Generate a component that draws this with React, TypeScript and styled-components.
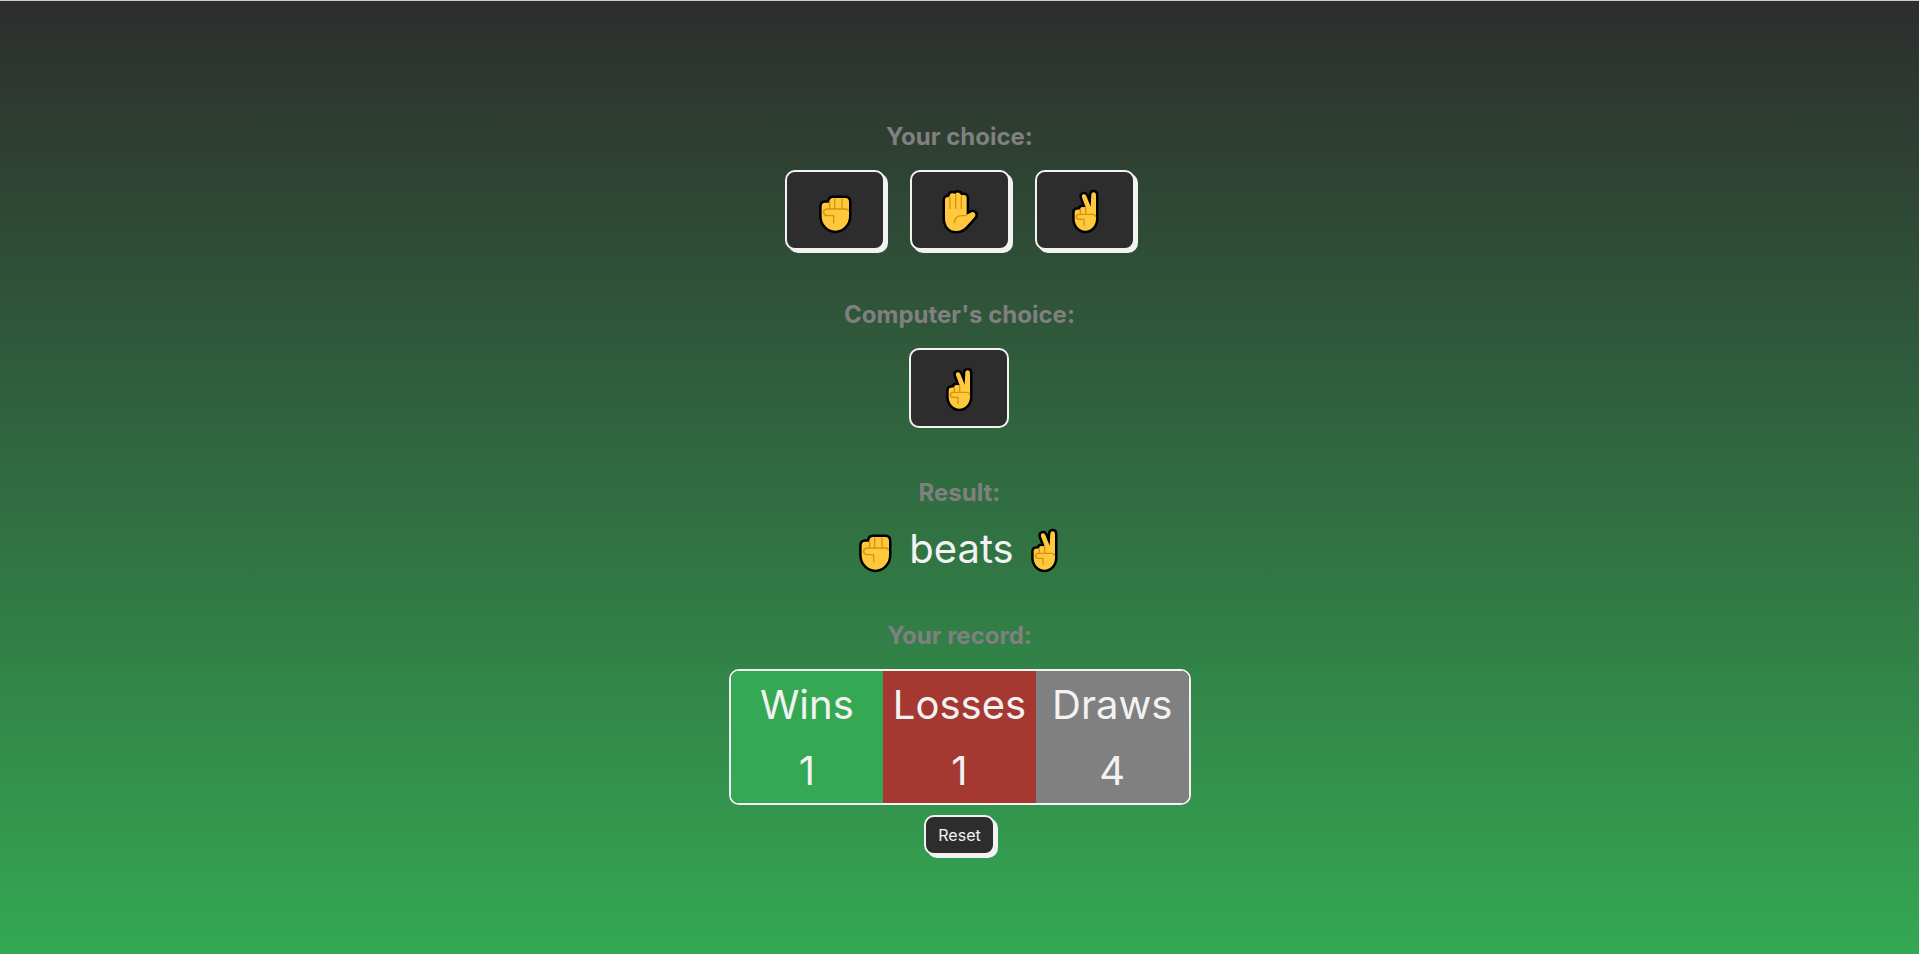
import React, { useState } from "react";
import styled, { createGlobalStyle, css } from "styled-components";

const dark = "#2d2d2d";
const light = "#f2f2f2";
const green = "#34a853";
const red = "#a63832";
const gray = "#808080";

const GlobalStyle = createGlobalStyle`
  *, *::before, *::after { box-sizing: border-box; }
  body {
    margin: 0;
    font-family: Inter, "Liberation Sans", sans-serif;
    color: ${light};
    background: ${dark};
  }
`;

const Page = styled.main`
  min-height: 100vh;
  display: flex;
  flex-direction: column;
  align-items: center;
  justify-content: center;
  gap: 50px;
  padding: 42px 20px 20px;
  border-top: 1px solid #c9cdca;
  background: linear-gradient(${dark}, ${green});
`;

const Section = styled.section`
  display: flex;
  flex-direction: column;
  align-items: center;
`;

const Heading = styled.h2`
  margin: 0 0 19px;
  font-size: 24px;
  line-height: 29px;
  font-weight: 700;
  color: ${gray};
`;

const Choices = styled.div`
  display: flex;
  gap: 25px;
`;

const frame = css`
  border: 2px solid ${light};
  border-radius: 10px;
  background: ${dark};
  color: ${light};
`;

const raised = css`
  box-shadow: 3px 3px 0 ${light};
  cursor: pointer;
  &:active { box-shadow: none; }
`;

const tile = css`
  ${frame}
  display: flex;
  align-items: center;
  justify-content: center;
  width: 100px;
  height: 80px;
  padding: 0;
`;

const ChoiceButton = styled.button`
  ${tile}
  ${raised}
`;

const ComputerTile = styled.div`
  ${tile}
`;

const Outcome = styled.p`
  display: flex;
  align-items: center;
  height: 45px;
  margin: 0;
  font-size: 40px;
  line-height: 44px;
`;

const Verb = styled.span`
  padding: 0 6px 0 10px;
`;

const RecordFrame = styled.div`
  ${frame}
  overflow: hidden;
  margin-bottom: 10px;
`;

const RecordTable = styled.table`
  width: 458px;
  max-width: 100%;
  table-layout: fixed;
  border-collapse: collapse;
  font-size: 40px;
  line-height: 48px;
`;

const tones = { win: green, loss: red, draw: gray };
type Tone = keyof typeof tones;

const cell = css<{ $tone: Tone }>`
  padding: 10px 0 8px;
  font-weight: 400;
  text-align: center;
  background: ${(p) => tones[p.$tone]};
`;

const HeadCell = styled.th<{ $tone: Tone }>`${cell}`;
const Cell = styled.td<{ $tone: Tone }>`${cell}`;

const ResetButton = styled.button`
  ${frame}
  ${raised}
  height: 40px;
  padding: 0 12px;
  font-family: inherit;
  font-size: 16px;
`;

const HandSvg = styled.svg`
  display: block;
  width: 48px;
  height: 48px;
  flex: none;
`;

type Hand = "rock" | "paper" | "scissors";

const shapes: Record<Hand, { outline: string; creases: string }> = {
  rock: {
    outline:
      "M62 80 Q62 68 72 68 L82 68 Q85 68 86 62 Q87 54 96 54 L133 54 Q144 54 144 66 V108 A41 44 0 0 1 62 108 Z",
    creases:
      "M86 62 V86 M101 55 V86 M123 55 V86 M143 94 Q142 87 133 87 H78 Q68 88 68 97 Q69 107 79 107 H98 V130",
  },
  paper: {
    outline:
      "M57 58 Q58 51 64 52 Q70 50 71 47 Q72 39 80 40 Q86 40 88 43 Q90 37 97 38 Q104 38 105 46 Q109 44 113 45 Q122 45 122 55 V104 L134 98 Q141 94 146 99 Q151 105 146 111 L121 139 Q109 153 90 153 C70 153 57 138 57 113 Z",
    creases: "M72 50 V87 M89 44 V87 M106 48 V87 M85 130 Q86 107 107 107 H122",
  },
  scissors: {
    outline:
      "M71 96 Q72 88 79 89 L87 88 Q88 81 94 81 L104 82 L93 52 Q91 45 97 43 Q103 41 106 48 L119 80 L121 43 Q122 37 128 37 Q134 37 135 44 V117 A32 35 0 0 1 71 117 Z",
    creases:
      "M88 88 V102 M104 82 V102 M134 111 Q133 103 124 103 H84 Q76 104 76 110 Q77 118 85 118 H99 V137",
  },
};

function HandIcon({ hand }: { hand: Hand }) {
  const { outline, creases } = shapes[hand];
  return (
    <HandSvg viewBox="30 18 144 144" role="img" aria-label={hand}>
      <path d={outline} fill="#000" stroke="#000" strokeWidth="15" strokeLinejoin="round" />
      <path d={outline} fill="#ffc83d" />
      <path d={creases} fill="none" stroke="#d8930e" strokeWidth="4" strokeLinejoin="round" />
    </HandSvg>
  );
}

const hands: Hand[] = ["rock", "paper", "scissors"];

const beats: Record<Hand, Hand> = { rock: "scissors", paper: "rock", scissors: "paper" };

export default function App() {
  const [you, setYou] = useState<Hand>("rock");
  const [computer, setComputer] = useState<Hand>("scissors");
  const [record, setRecord] = useState({ win: 1, loss: 1, draw: 4 });

  const play = (hand: Hand) => {
    const reply = hands[Math.floor(Math.random() * hands.length)];
    const tone: Tone = hand === reply ? "draw" : beats[hand] === reply ? "win" : "loss";
    setYou(hand);
    setComputer(reply);
    setRecord((r) => ({ ...r, [tone]: r[tone] + 1 }));
  };

  const computerWon = beats[computer] === you;

  return (
    <>
      <GlobalStyle />
      <Page>
        <Section>
          <Heading>Your choice:</Heading>
          <Choices>
            {hands.map((hand) => (
              <ChoiceButton key={hand} type="button" aria-label={hand} onClick={() => play(hand)}>
                <HandIcon hand={hand} />
              </ChoiceButton>
            ))}
          </Choices>
        </Section>
        <Section>
          <Heading>Computer's choice:</Heading>
          <ComputerTile>
            <HandIcon hand={computer} />
          </ComputerTile>
        </Section>
        <Section>
          <Heading>Result:</Heading>
          <Outcome>
            <HandIcon hand={computerWon ? computer : you} />
            <Verb>{you === computer ? "ties" : "beats"}</Verb>
            <HandIcon hand={computerWon ? you : computer} />
          </Outcome>
        </Section>
        <Section>
          <Heading>Your record:</Heading>
          <RecordFrame>
            <RecordTable>
              <thead>
                <tr>
                  <HeadCell scope="col" $tone="win">Wins</HeadCell>
                  <HeadCell scope="col" $tone="loss">Losses</HeadCell>
                  <HeadCell scope="col" $tone="draw">Draws</HeadCell>
                </tr>
              </thead>
              <tbody>
                <tr>
                  <Cell $tone="win">{record.win}</Cell>
                  <Cell $tone="loss">{record.loss}</Cell>
                  <Cell $tone="draw">{record.draw}</Cell>
                </tr>
              </tbody>
            </RecordTable>
          </RecordFrame>
          <ResetButton type="button" onClick={() => setRecord({ win: 0, loss: 0, draw: 0 })}>
            Reset
          </ResetButton>
        </Section>
      </Page>
    </>
  );
}
